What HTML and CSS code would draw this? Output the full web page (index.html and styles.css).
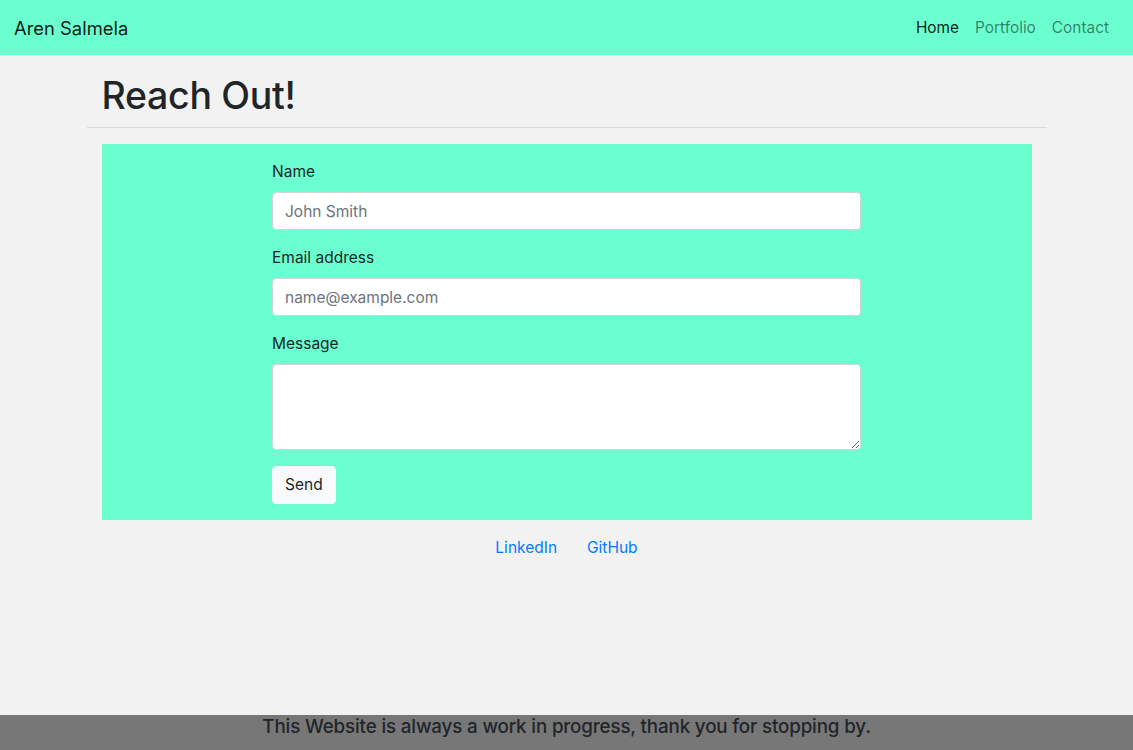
FILE: index.html
```html
<!DOCTYPE html>
<html lang="en">
<head>
<meta charset="utf-8">
<title>Contact - Aren Salmela</title>
<link rel="stylesheet" href="styles.css">
</head>
<body>
<nav class="navbar">
  <a class="brand" href="#">Aren Salmela</a>
  <ul class="nav-links">
    <li><a class="nav-link active" href="#">Home</a></li>
    <li><a class="nav-link" href="#">Portfolio</a></li>
    <li><a class="nav-link" href="#">Contact</a></li>
  </ul>
</nav>
<main class="page">
  <div class="inner">
    <h1 class="title">Reach Out!</h1>
  </div>
  <hr class="divider">
  <div class="inner">
    <section class="panel">
      <form class="contact-form">
        <div class="form-group">
          <label for="name">Name</label>
          <input id="name" class="form-control" type="text" placeholder="John Smith">
        </div>
        <div class="form-group">
          <label for="email">Email address</label>
          <input id="email" class="form-control" type="email" placeholder="name@example.com">
        </div>
        <div class="form-group">
          <label for="msg">Message</label>
          <textarea id="msg" class="form-control textarea" rows="3"></textarea>
        </div>
        <button type="button" class="btn">Send</button>
      </form>
    </section>
    <ul class="social">
      <li><a class="social-link" href="#">LinkedIn</a></li>
      <li><a class="social-link" href="#">GitHub</a></li>
    </ul>
  </div>
</main>
<footer class="footer">
  <p class="footer-text">This Website is always a work in progress, thank you for stopping by.</p>
</footer>
</body>
</html>
```
FILE: styles.css
```css
* { box-sizing: border-box; }
html, body { height: 100%; }
body {
  margin: 0;
  min-height: 100vh;
  display: flex;
  flex-direction: column;
  background: #f2f2f2;
  color: #212529;
  font-family: Inter, "Noto Sans", "Liberation Sans", sans-serif;
  font-size: 16px;
  line-height: 24px;
}
.navbar {
  display: flex;
  align-items: center;
  justify-content: space-between;
  background: #6bffd0;
  height: 55px;
  padding: 0 16px 0 14px;
}
.brand {
  color: rgba(0,0,0,.9);
  text-decoration: none;
  font-size: 18.4px;
  line-height: 30px;
}
.nav-links {
  display: flex;
  list-style: none;
  margin: 0;
  padding: 0;
}
.nav-link {
  display: block;
  padding: 8px 8px;
  color: rgba(0,0,0,.5);
  text-decoration: none;
  font-size: 15.4px;
  line-height: 24px;
}
.nav-link.active { color: rgba(0,0,0,.9); }
.page {
  width: 960px;
  margin: 0 auto;
  flex: 1 0 auto;
}
.inner { padding: 0 15px; }
.title {
  margin: 17px 0 0;
  font-size: 37.5px;
  font-weight: 500;
  line-height: 48px;
  letter-spacing: -0.3px;
}
.divider {
  margin: 7px 0 16px;
  border: 0;
  border-top: 1px solid rgba(0,0,0,.1);
}
.panel {
  background: #6bffd0;
  padding: 16px 0;
}
.contact-form {
  width: 589px;
  margin: 0 auto;
}
.form-group { margin-bottom: 16px; }
label {
  display: block;
  margin-bottom: 8px;
  font-size: 15.5px;
  line-height: 24px;
}
.form-control {
  display: block;
  width: 100%;
  height: 38px;
  padding: 6px 12px;
  font-family: inherit;
  font-size: 15.5px;
  line-height: 24px;
  color: #495057;
  background: #fff;
  border: 1px solid #ced4da;
  border-radius: 4px;
  margin: 0;
}
.form-control::placeholder { color: #6c757d; opacity: 1; }
.textarea { height: 86px; resize: vertical; }
.btn {
  display: block;
  height: 38px;
  padding: 6px 12px;
  font-family: inherit;
  font-size: 15.5px;
  line-height: 24px;
  color: #212529;
  background: #f8f9fa;
  border: 1px solid #f8f9fa;
  border-radius: 4px;
  margin: 0;
}
.social {
  display: flex;
  justify-content: center;
  list-style: none;
  margin: 8px 0 0;
  padding: 0;
}
.social-link {
  display: block;
  padding: 8px 15px;
  color: #007bff;
  text-decoration: none;
  font-size: 15.5px;
  line-height: 24px;
}
.footer {
  background: #777777;
  height: 35px;
  display: flex;
  align-items: flex-start;
  justify-content: center;
}
.footer-text {
  margin: 0;
  font-size: 18.8px;
  font-weight: 500;
  line-height: 24px;
  color: #212529;
  letter-spacing: -0.15px;
}
```
